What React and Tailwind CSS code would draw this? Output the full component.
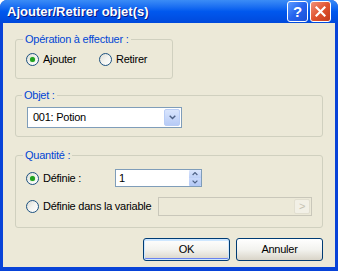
import React, { useState } from "react";

const font = { fontFamily: '"Liberation Sans", Arial, sans-serif' };

const Radio = ({ checked, onClick }) => (
  <span
    onClick={onClick}
    className="flex h-[13px] w-[13px] shrink-0 items-center justify-center rounded-full border border-[#1c5180] bg-linear-to-br from-[#dcdcd4] via-[#f4f4f0] to-white"
  >
    {checked && <span className="h-[5px] w-[5px] rounded-full bg-[#21a121] shadow-[0_0_1px_#5fd35f]" />}
  </span>
);

const Arrow = ({ down = true, size = 7 }) => (
  <svg width={size} height={size * 0.6} viewBox="0 0 10 6">
    <path
      d={down ? "M1 1 L5 5 L9 1" : "M1 5 L5 1 L9 5"}
      fill="none"
      stroke="#4d6185"
      strokeWidth="2"
    />
  </svg>
);

const XpButton = ({ children, def }) => (
  <button
    className={`h-[23px] w-[87px] rounded-[3px] border border-[#003c74] text-[11px] text-black bg-linear-to-b from-white via-[#f3f3ef] to-[#d9d4c8] ${
      def ? "shadow-[inset_0_0_0_1px_#cee7ff,inset_0_-2px_0_#6982ee,inset_0_2px_0_#cee7ff]" : ""
    }`}
  >
    {children}
  </button>
);

export default function App() {
  const [mode, setMode] = useState("add");
  const [qty, setQty] = useState("fixed");

  return (
    <div style={font} className="flex h-[271px] w-[338px] flex-col rounded-t-[7px] bg-[#0843d8] text-[11px] tracking-[-0.25px] text-black">
      {/* title bar */}
      <div className="flex h-[23px] shrink-0 items-center rounded-t-[7px] bg-linear-to-b from-[#3b8cf6] via-[#0058ee] to-[#0049dc] pl-[7px] pr-[7px]">
        <span className="flex-1 text-[13px] font-bold leading-none tracking-normal text-white [text-shadow:1px_1px_0_#0a1883]">
          Ajouter/Retirer objet(s)
        </span>
        <div className="flex gap-[2px]">
          <div className="flex h-[21px] w-[21px] items-center justify-center rounded-[3px] border border-white bg-linear-to-br from-[#5b9bff] via-[#2563ee] to-[#1c4fd6] text-[15px] font-bold leading-none text-white">
            ?
          </div>
          <div className="flex h-[21px] w-[21px] items-center justify-center rounded-[3px] border border-white bg-linear-to-br from-[#f09078] via-[#e0532f] to-[#c33b1d]">
            <svg width="11" height="11" viewBox="0 0 11 11">
              <path d="M1.5 1.5 L9.5 9.5 M9.5 1.5 L1.5 9.5" stroke="white" strokeWidth="2.2" strokeLinecap="square" />
            </svg>
          </div>
        </div>
      </div>

      {/* body */}
      <div className="mx-[3px] mb-[4px] flex flex-1 flex-col bg-[#ece9d8] px-[12px] pt-[9px]">
        <fieldset className="h-[47px] w-[158px] rounded-[3px] border border-[#d0d0bf]">
          <legend className="ml-[7px] px-[2px] leading-[14px] text-[#0046d5]">Opération à effectuer :</legend>
          <div className="mt-[7px] flex h-[13px] items-center pl-[10px]">
            <label className="flex w-[73px] items-center gap-[4px]" onClick={() => setMode("add")}>
              <Radio checked={mode === "add"} />
              <span>Ajouter</span>
            </label>
            <label className="flex items-center gap-[4px]" onClick={() => setMode("remove")}>
              <Radio checked={mode === "remove"} />
              <span>Retirer</span>
            </label>
          </div>
        </fieldset>

        <fieldset className="mt-[9px] h-[49px] rounded-[3px] border border-[#d0d0bf]">
          <legend className="ml-[6px] px-[2px] leading-[14px] text-[#0046d5]">Objet :</legend>
          <div className="ml-[11px] mt-[5px] flex h-[21px] w-[155px] items-center border border-[#7f9db9] bg-white p-[1px]">
            <span className="flex-1 pl-[4px]">001: Potion</span>
            <span className="flex h-full w-[16px] items-center justify-center rounded-[2px] border border-[#b9cdf6] bg-linear-to-b from-[#d9e5fd] to-[#b7cbf6]">
              <Arrow />
            </span>
          </div>
        </fieldset>

        <fieldset className="mt-[11px] h-[80px] rounded-[3px] border border-[#d0d0bf]">
          <legend className="ml-[7px] px-[2px] leading-[14px] text-[#0046d5]">Quantité :</legend>
          <div className="mt-[7px] flex items-start pl-[10px]">
            <label className="mt-[1px] flex w-[89px] items-center gap-[4px]" onClick={() => setQty("fixed")}>
              <Radio checked={qty === "fixed"} />
              <span>Définie :</span>
            </label>
            <div className="flex h-[18px] w-[87px] items-center border border-[#7f9db9] bg-white">
              <span className="flex-1 pl-[3px]">1</span>
              <span className="flex h-[16px] w-[12px] flex-col">
                <span className="flex flex-1 items-center justify-center rounded-t-[1px] bg-linear-to-b from-[#dbe6fd] to-[#bccff7]">
                  <Arrow down={false} size={6} />
                </span>
                <span className="flex flex-1 items-center justify-center rounded-b-[1px] bg-linear-to-b from-[#c9d9fb] to-[#b2c7f5]">
                  <Arrow size={6} />
                </span>
              </span>
            </div>
          </div>
          <div className="mt-[10px] flex items-center pl-[10px]">
            <label className="flex w-[132px] shrink-0 items-center gap-[4px]" onClick={() => setQty("var")}>
              <Radio checked={qty === "var"} />
              <span className="whitespace-nowrap">Définie dans la variable</span>
            </label>
            <div className="flex h-[19px] w-[154px] items-center justify-end border border-[#c9c7ba] bg-[#ece9d8] pr-[1px]">
              <span className="flex h-[15px] w-[16px] items-center justify-center rounded-[2px] border border-[#e2dfd0] bg-[#f2f0e6] text-[11px] leading-none text-[#c5c2b2]">
                &gt;
              </span>
            </div>
          </div>
        </fieldset>

        <div className="mt-[10px] flex justify-end gap-[6px]">
          <XpButton def>OK</XpButton>
          <XpButton>Annuler</XpButton>
        </div>
      </div>
    </div>
  );
}
